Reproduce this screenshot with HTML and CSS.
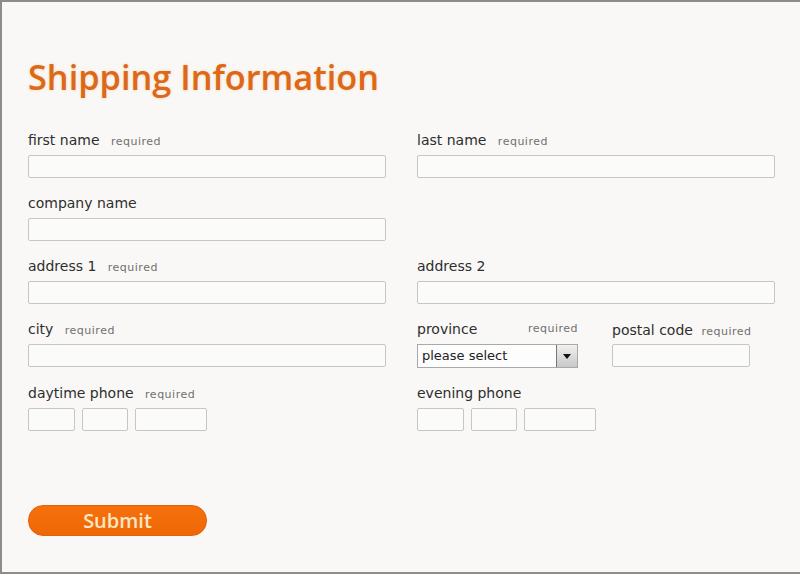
FILE: index.html
```html
<!DOCTYPE html>
<html>
<head>
    <title>Shipping Information</title>
    <link rel="stylesheet" href="styles.css">
</head>
<body>

    <h1>Shipping Information</h1>

    <form class="form">
        <div class="field">
            <label>first name <span class="req">required</span></label>
            <input type="text" class="box">
        </div>
        <div class="field">
            <label>last name <span class="req">required</span></label>
            <input type="text" class="box">
        </div>

        <div class="field">
            <label>company name</label>
            <input type="text" class="box">
        </div>
        <div class="field"></div>

        <div class="field">
            <label>address 1 <span class="req">required</span></label>
            <input type="text" class="box">
        </div>
        <div class="field">
            <label>address 2</label>
            <input type="text" class="box">
        </div>

        <div class="field">
            <label>city <span class="req">required</span></label>
            <input type="text" class="box">
        </div>
        <div class="split">
            <div class="field province">
                <label class="spread">province <span class="req">required</span></label>
                <div class="select">
                    <span class="select-text">please select</span>
                    <span class="select-arrow"></span>
                </div>
            </div>
            <div class="field postal">
                <label>postal code <span class="req">required</span></label>
                <input type="text" class="box">
            </div>
        </div>

        <div class="field">
            <label>daytime phone <span class="req">required</span></label>
            <div class="phone">
                <input type="text" class="box p1">
                <input type="text" class="box p2">
                <input type="text" class="box p3">
            </div>
        </div>
        <div class="field">
            <label>evening phone</label>
            <div class="phone">
                <input type="text" class="box p1">
                <input type="text" class="box p2">
                <input type="text" class="box p3">
            </div>
        </div>
    </form>

    <button type="button" class="submit">Submit</button>

</body>
</html>
```

FILE: styles.css
```css
body {
    margin: 0;
    box-sizing: border-box;
    height: 574px;
    padding: 0 0 0 26px;
    background: #f9f8f6;
    border: 2px solid #8c8c8c;
    border-right: 0;
    font-family: 'DejaVu Sans', sans-serif;
    color: #333;
    overflow: hidden;
}
h1 {
    margin: 55px 0 0 0;
    font-family: 'Open Sans', sans-serif;
    font-weight: 600;
    font-size: 34.3px;
    line-height: 40px;
    color: #dc6818;
    text-shadow: 0 0 3px rgba(240, 150, 60, 0.35);
}

/* form grid */
.form {
    display: grid;
    grid-template-columns: 358px 358px;
    column-gap: 31px;
    row-gap: 16px;
    margin-top: 34px;
}
.field label {
    display: block;
    height: 18px;
    line-height: 18px;
    font-size: 14px;
    color: #2e2e2e;
    margin-bottom: 6px;
    white-space: nowrap;
}
.req {
    font-size: 11px;
    letter-spacing: 0.5px;
    color: #707070;
    margin-left: 7px;
}
.box {
    display: block;
    box-sizing: border-box;
    width: 100%;
    height: 23px;
    margin: 0;
    padding: 0 4px;
    background: #fbfbfa;
    border: 1px solid #c6c6c4;
    border-radius: 2px;
    outline: none;
}

.split {
    display: flex;
    gap: 34px;
}
.province {
    width: 161px;
}
.spread {
    display: flex !important;
    justify-content: space-between;
}
.postal {
    width: 138px;
    margin-top: 1px;
}
.postal label {
    margin-bottom: 5px;
}
.postal .req {
    margin-left: 4px;
}

.select {
    display: flex;
    box-sizing: border-box;
    height: 24px;
    background: #fdfdfd;
    border: 1px solid #a9a9a9;
}
.select-text {
    flex: 1;
    padding-left: 4px;
    font-size: 13px;
    line-height: 22px;
    color: #222;
}
.select-arrow {
    width: 20px;
    border-left: 1px solid #777;
    background: linear-gradient(#f0f0f0, #c8c8c8);
    position: relative;
}
.select-arrow::after {
    content: '';
    position: absolute;
    left: 6px;
    top: 9px;
    border-left: 4px solid transparent;
    border-right: 4px solid transparent;
    border-top: 5px solid #111;
}

.phone {
    display: flex;
    gap: 7px;
}
.phone .p1 { width: 47px; }
.phone .p2 { width: 46px; }
.phone .p3 { width: 72px; }

.submit {
    display: block;
    margin-top: 74px;
    width: 179px;
    height: 31px;
    padding: 0;
    background: linear-gradient(#f6700c, #ee6806);
    border: 1px solid #e2620a;
    border-radius: 15px;
    color: #fbe6c4;
    font-family: 'Open Sans', sans-serif;
    font-weight: 600;
    font-size: 20px;
    line-height: 28px;
    cursor: pointer;
}
```
